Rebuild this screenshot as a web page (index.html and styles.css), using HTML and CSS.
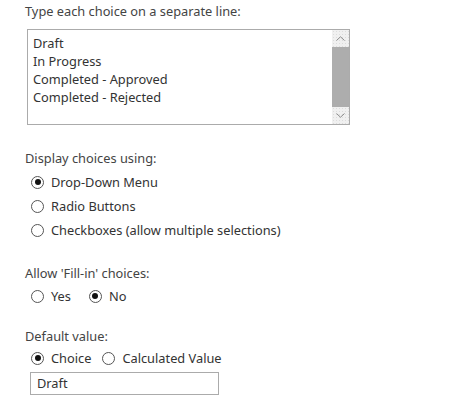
FILE: index.html
```html
<!DOCTYPE html>
<html>
<head>
<meta charset="utf-8">
<link rel="stylesheet" href="styles.css">
</head>
<body>
<div class="page">
  <div class="field-label first">Type each choice on a separate line:</div>
  <div class="choices-box">
    <div class="choices-text">
      <div>Draft</div>
      <div>In Progress</div>
      <div>Completed - Approved</div>
      <div>Completed - Rejected</div>
    </div>
    <div class="scrollbar">
      <div class="sb-btn">
        <svg width="9" height="5" viewBox="0 0 9 5"><path d="M0.5 4.5 L4.5 0.8 L8.5 4.5" fill="none" stroke="#8a8a8a" stroke-width="1"/></svg>
      </div>
      <div class="sb-thumb"></div>
      <div class="sb-btn">
        <svg width="9" height="5" viewBox="0 0 9 5"><path d="M0.5 0.5 L4.5 4.2 L8.5 0.5" fill="none" stroke="#8a8a8a" stroke-width="1"/></svg>
      </div>
    </div>
  </div>

  <div class="field-label display">Display choices using:</div>
  <div class="radio-list">
    <label class="radio"><span class="dot checked"></span>Drop-Down Menu</label>
    <label class="radio"><span class="dot"></span>Radio Buttons</label>
    <label class="radio"><span class="dot"></span>Checkboxes (allow multiple selections)</label>
  </div>

  <div class="field-label fillin">Allow 'Fill-in' choices:</div>
  <div class="radio-inline yesno">
    <label class="radio"><span class="dot"></span>Yes</label>
    <label class="radio"><span class="dot checked"></span>No</label>
  </div>

  <div class="field-label default">Default value:</div>
  <div class="radio-inline choicecalc">
    <label class="radio"><span class="dot checked"></span>Choice</label>
    <label class="radio"><span class="dot"></span>Calculated Value</label>
  </div>
  <div class="text-input">Draft</div>
</div>
</body>
</html>
```

FILE: styles.css
```css
html, body {
  margin: 0;
  padding: 0;
  background: #ffffff;
}

body {
  font-family: "Segoe UI", "Noto Sans", "Open Sans", sans-serif;
  font-size: 12.8px;
  line-height: 18px;
  color: #333333;
}

.page {
  padding: 2px 0 0 25px;
}

.field-label {
  color: #444444;
  height: 18px;
}

.choices-box {
  margin-top: 9px;
  margin-left: 2px;
  width: 321px;
  height: 94px;
  border: 1px solid #ababab;
  display: flex;
}

.choices-text {
  flex: 1;
  padding: 4px 0 0 5px;
  color: #333333;
}

.scrollbar {
  width: 17px;
  display: flex;
  flex-direction: column;
}

.sb-btn {
  height: 17px;
  background-color: #f0f0f0;
  background-image: radial-gradient(circle, #dcdcdc 0.6px, transparent 0.8px);
  background-size: 3px 3px;
  display: flex;
  align-items: center;
  justify-content: center;
}

.sb-thumb {
  flex: 1;
  background: #adadad;
}

.field-label.display { margin-top: 24px; }
.field-label.fillin { margin-top: 25px; }
.field-label.default { margin-top: 22px; }

.radio-list {
  margin-top: 6px;
  display: flex;
  flex-direction: column;
  gap: 6px;
}

.radio {
  display: flex;
  align-items: center;
  height: 18px;
  gap: 7px;
  padding-left: 6px;
}

.dot {
  width: 11px;
  height: 11px;
  border: 1px solid #555555;
  border-radius: 50%;
  box-sizing: content-box;
  position: relative;
  flex: none;
}

.dot.checked::after {
  content: "";
  position: absolute;
  left: 2.5px;
  top: 2.5px;
  width: 6px;
  height: 6px;
  border-radius: 50%;
  background: #111111;
}

.radio-inline {
  display: flex;
  gap: 6px;
}

.yesno { margin-top: 5px; gap: 12px; }
.choicecalc { margin-top: 4px; gap: 5px; }

.text-input {
  margin-top: 5px;
  margin-left: 5px;
  width: 181px;
  height: 21px;
  border: 1px solid #ababab;
  padding: 0 0 0 6px;
  line-height: 21px;
  color: #333333;
}
```
